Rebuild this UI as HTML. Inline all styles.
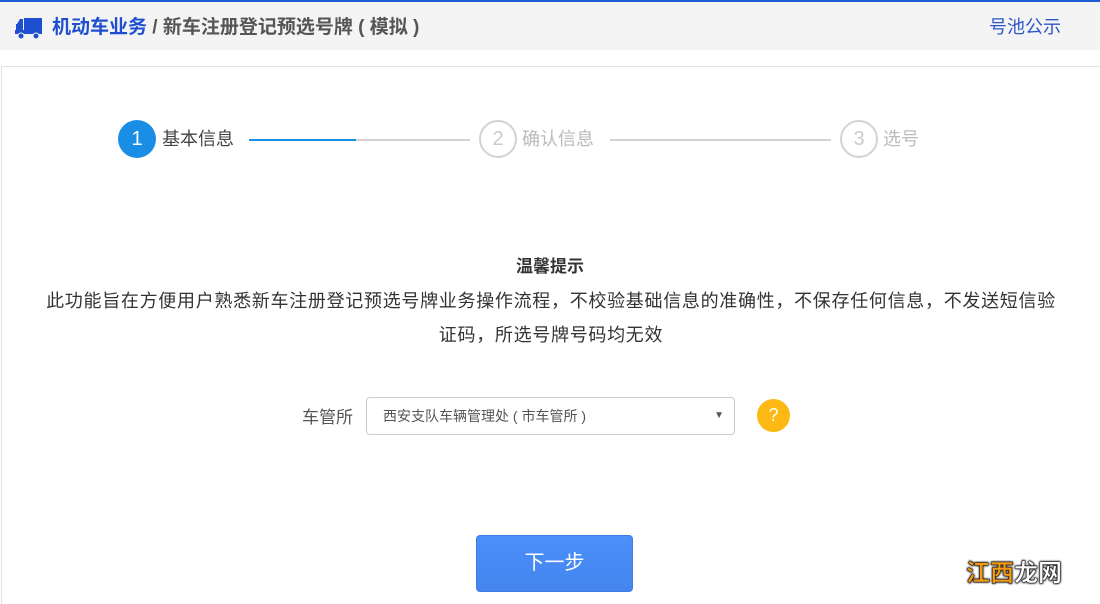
<!DOCTYPE html>
<html><head><meta charset="utf-8"><style>
*{margin:0;padding:0;box-sizing:border-box}
html,body{width:1100px;height:604px;overflow:hidden}
body{background:#fff;font-family:"Liberation Sans","Noto Sans CJK SC",sans-serif;position:relative}
.top{position:absolute;left:0;top:0;width:1100px;height:50px;background:#f4f4f4;border-top:2px solid #1e5bd6}
.t{position:absolute;top:13px;font-size:19px;font-weight:bold;line-height:26px}
.box{position:absolute;left:1px;top:66px;width:1110px;height:560px;border:1px solid #e2e2e2}
.c{position:absolute;border-radius:50%;width:38px;height:38px;text-align:center;line-height:34px;font-size:20px}
.lbl{position:absolute;top:126px;font-size:18px;line-height:26px}
.ln{position:absolute;top:139px;height:2px;background:#d6d2d2}
</style></head><body>
<div class="top">
<svg style="position:absolute;left:15px;top:14px" width="27" height="24" viewBox="0 0 27 24"><rect x="9" y="2" width="18" height="14" fill="#1e4fd0"/><path d="M1 8h7v10H1z M2 8l3-5h3v5z" fill="#1e4fd0"/><rect x="0" y="14" width="27" height="4" fill="#1e4fd0"/><circle cx="6" cy="20" r="3" fill="#1e4fd0" stroke="#f4f4f4" stroke-width="1"/><circle cx="21" cy="20" r="3" fill="#1e4fd0" stroke="#f4f4f4" stroke-width="1"/></svg>
<div class="t" style="left:52px;color:#1e4fd0">机动车业务 <span style="color:#555">/ 新车注册登记预选号牌 ( 模拟 )</span></div>
<div style="position:absolute;left:989px;top:13px;font-size:18px;color:#2d55c8;line-height:24px">号池公示</div>
</div>
<div class="box"></div>
<div class="c" style="left:118px;top:120px;background:#1a8de5;color:#fff;line-height:38px">1</div>
<div class="lbl" style="left:162px;color:#444">基本信息</div>
<div class="ln" style="left:249px;width:221px"></div>
<div class="ln" style="left:249px;width:107px;background:#1a8de5"></div>
<div class="c" style="left:479px;top:120px;border:2px solid #d6d2d2;color:#ccc">2</div>
<div class="lbl" style="left:522px;color:#bbb">确认信息</div>
<div class="ln" style="left:610px;width:221px"></div>
<div class="c" style="left:840px;top:120px;border:2px solid #d6d2d2;color:#ccc">3</div>
<div class="lbl" style="left:883px;color:#bbb">选号</div>
<div style="position:absolute;left:0;top:252px;width:1100px;text-align:center;font-size:17px;font-weight:bold;color:#333">温馨提示</div>
<div style="position:absolute;left:40px;top:284px;width:1022px;text-align:center;font-size:18px;letter-spacing:0.7px;line-height:34px;color:#333">此功能旨在方便用户熟悉新车注册登记预选号牌业务操作流程，不校验基础信息的准确性，不保存任何信息，不发送短信验证码，所选号牌号码均无效</div>
<div style="position:absolute;left:302px;top:403px;font-size:17px;color:#555">车管所</div>
<div style="position:absolute;left:366px;top:397px;width:369px;height:38px;border:1px solid #ccc;border-radius:4px;font-size:14px;color:#555;line-height:36px;padding-left:16px">西安支队车辆管理处 ( 市车管所 )<span style="position:absolute;right:10px;font-size:10px;color:#555">▼</span></div>
<div style="position:absolute;left:757px;top:399px;width:33px;height:33px;border-radius:50%;background:#fcb813;color:#fff;text-align:center;line-height:33px;font-size:18px">?</div>
<div style="position:absolute;left:476px;top:535px;width:157px;height:57px;border-radius:4px;background:linear-gradient(#4c8ffa,#4485ee);border:1px solid #3f7ee0;color:#fff;text-align:center;line-height:55px;font-size:20px">下一步</div>
<div style="position:absolute;left:966px;top:559px;font-size:24px;font-weight:bold;line-height:30px;-webkit-text-stroke:0.5px #222;text-shadow:0 0 2px #000,0 0 2px #000"><span style="color:#f59a10">江西</span><span style="color:#fff">龙网</span></div>
</body></html>
